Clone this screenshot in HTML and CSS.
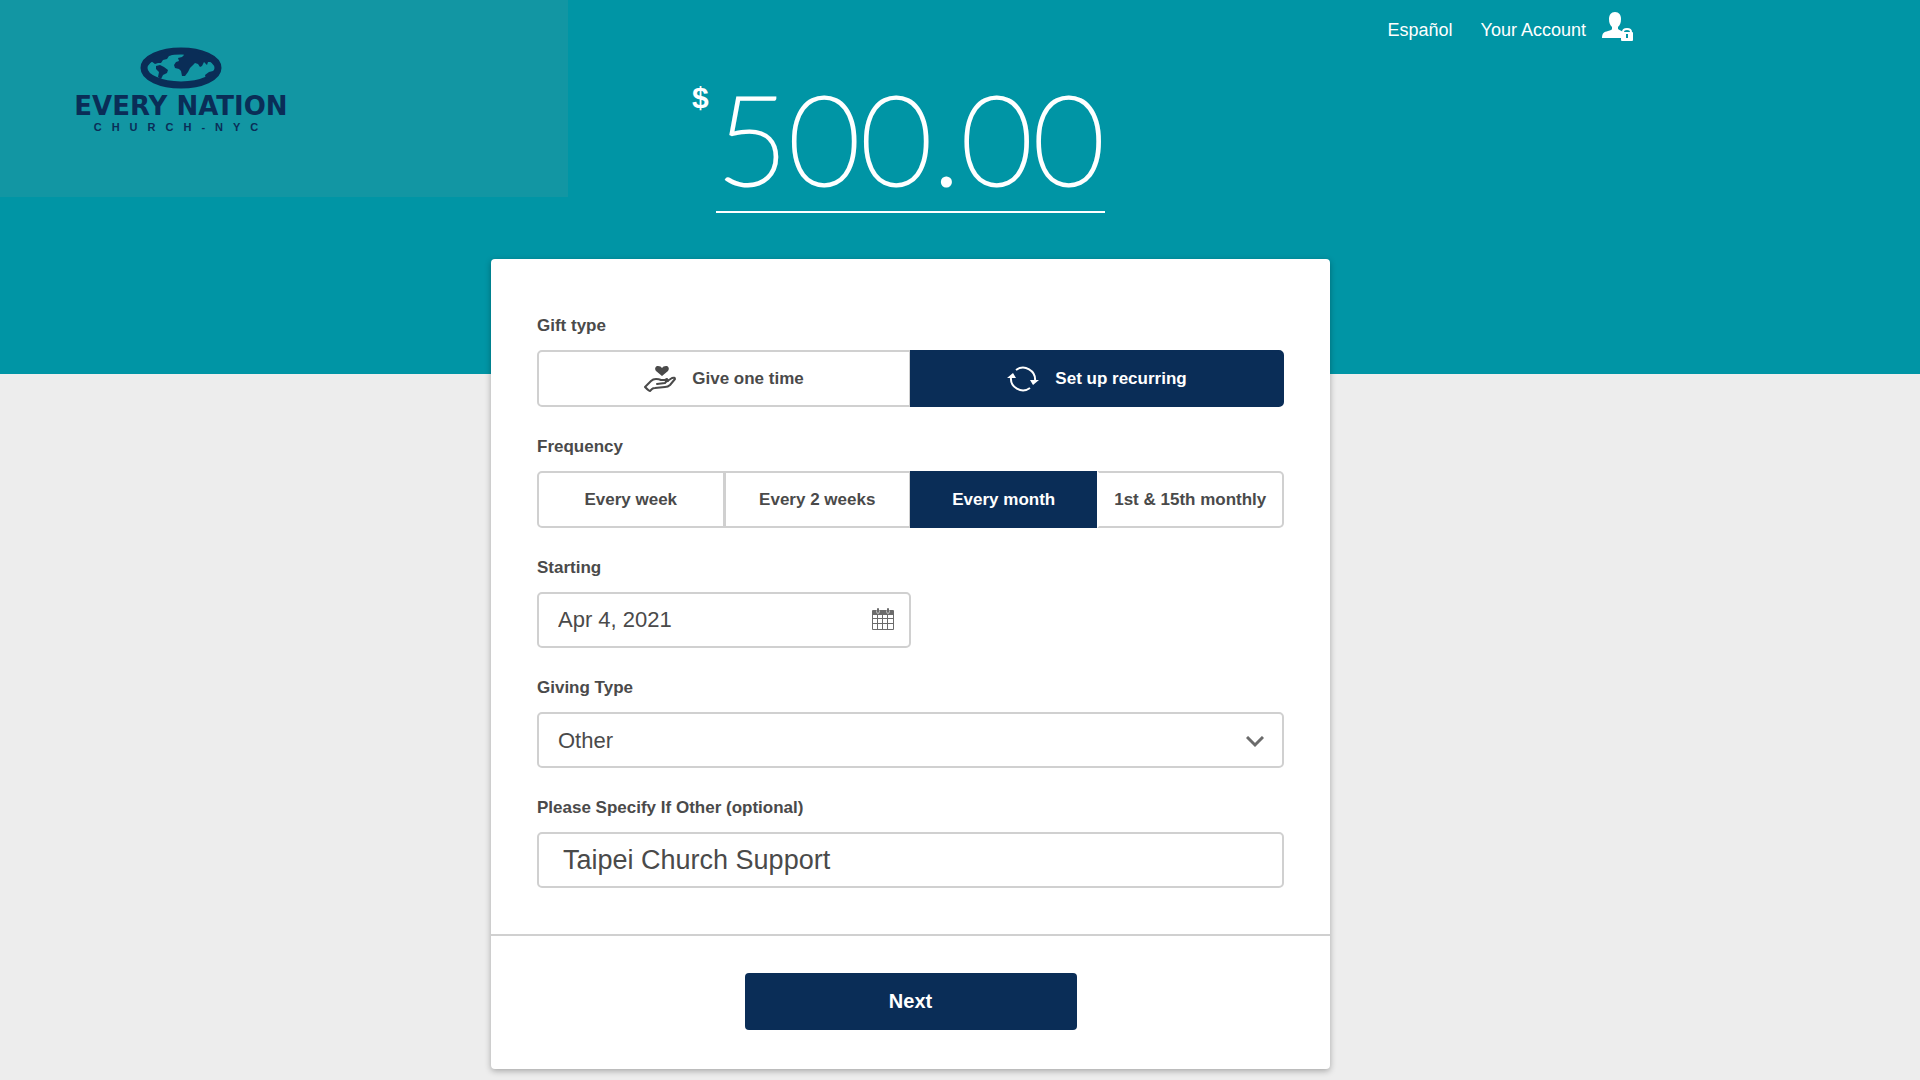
FILE: index.html
```html
<!DOCTYPE html>
<html lang="en">
  <head>
    <meta charset="UTF-8" />
    <meta name="viewport" content="width=device-width, initial-scale=1.0" />
    <title>Every Nation Church NYC - Give</title>
    <link rel="stylesheet" href="styles.css">
  </head>
  <body>
    <header class="banner">
      <div class="logo-panel">
        <div class="logo">
          <svg class="logo-globe" viewBox="0 0 82 42" aria-hidden="true">
            <ellipse cx="41" cy="21" rx="37" ry="17" fill="none" stroke="#0a2d57" stroke-width="7" />
            <path fill="#0a2d57" d="M8 14L16 8L28 4L38 4L34 7L29 9L27 12L23 13L21 16L18 16L15 17L11 14Z" />
            <path fill="#0a2d57" d="M16 19L20 18L24 20L28 23L27 26L23 28L21 32L18 30L19 25L16 22Z" />
            <path fill="#0a2d57" d="M34 18L36 15L39 14L38 11L42 10L44 8L43 5L58 5L70 10L72 15L68 15L67 18L64 15L62 19L60 20L58 17L55 16L52 19L50 21L48 25L45 29L42 29L41 24L39 22L35 21Z" />
            <path fill="#0a2d57" d="M65 28L69 25L73 24L77 21L77 26L72 30L66 32Z" />
          </svg>
          <div class="logo-name">EVERY NATION</div>
          <div class="logo-sub">CHURCH-NYC</div>
        </div>
      </div>

      <div class="amount">
        <label class="amount-sign" for="amount">$</label>
        <input class="amount-input" id="amount" type="text" value="500.00" form="gift-form" />
      </div>

      <nav class="top-nav">
        <a href="#" class="nav-link">Español</a>
        <a href="#" class="nav-link account">
          Your Account
          <svg class="account-icon" viewBox="0 0 32 30" aria-hidden="true">
            <path fill="#fff" d="M13 0C17 0 19 3 19 7C19 11 18 13 16 15V17C17 18 20 19 21 20Q19 21 19 26H0C0 21 2 20 6 19Q10 18 10 17V15C8 13 7 11 7 7C7 3 9 0 13 0Z" />
            <path fill="none" stroke="#fff" stroke-width="2" d="M21 21V20Q21 17 25 17Q29 17 29 20V21" />
            <rect x="19" y="20" width="12" height="9" rx="1" fill="#fff" />
            <path stroke="#0095a5" stroke-width="2" d="M25 22V26" />
          </svg>
        </a>
      </nav>
    </header>

    <main class="page">
      <form class="card" id="gift-form">
        <div class="card-body">
          <div class="field" role="group" aria-labelledby="gift-label">
            <span class="label" id="gift-label">Gift type</span>
            <div class="segments">
              <button type="button" class="segment">
                <svg class="segment-icon" viewBox="0 0 32 26" aria-hidden="true">
                  <path fill="#4a4a4a" d="M18 10L12 5C10 2 12 0 14 0Q17 0 18 2Q19 0 22 0C24 0 26 2 24 5Z" />
                  <path fill="none" stroke="#4a4a4a" stroke-width="2" stroke-linejoin="round" stroke-linecap="round" d="M1 21L7 15Q9 13 12 13Q15 13 17 14H21Q23 15 21 17L13 18M22 16L28 12Q31 11 31 13L26 19Q24 21 21 21L11 22Q9 22 8 23L6 25Q5 25 1 21M21 14L23 13L24 15" />
                </svg>
                Give one time
              </button>
              <button type="button" class="segment active">
                <svg class="segment-icon" viewBox="0 0 32 26" aria-hidden="true">
                  <path fill="none" stroke="#fff" stroke-width="2" d="M9 4A12 12 0 0 1 28 15M23 22A12 12 0 0 1 4 11" />
                  <path fill="#fff" d="M23 14L32 14L26 19ZM0 12L6 7L9 12Z" />
                </svg>
                Set up recurring
              </button>
            </div>
          </div>

          <div class="field" role="group" aria-labelledby="frequency-label">
            <span class="label" id="frequency-label">Frequency</span>
            <div class="segments">
              <button type="button" class="segment">Every week</button>
              <button type="button" class="segment">Every 2 weeks</button>
              <button type="button" class="segment active">Every month</button>
              <button type="button" class="segment">1st &amp; 15th monthly</button>
            </div>
          </div>

          <div class="field">
            <label class="label" for="start-date">Starting</label>
            <div class="control half">
              <input class="input" id="start-date" type="text" value="Apr 4, 2021" />
              <svg class="control-icon calendar" viewBox="0 0 22 22" aria-hidden="true">
                <path fill="#6b6b6b" d="M1 2H21Q22 2 22 3V21Q22 22 21 22H1Q0 22 0 21V3Q0 2 1 2Z" />
                <path fill="#fff" d="M1 7h4v3h-4zM6 7h4v3h-4zM11 7h4v3h-4zM16 7h5v3h-5zM1 11h4v4h-4zM6 11h4v4h-4zM11 11h4v4h-4zM16 11h5v4h-5zM1 16h4v5h-4zM6 16h4v5h-4zM11 16h4v5h-4zM16 16h5v5h-5z" />
                <path stroke="#fff" stroke-width="3" stroke-linecap="round" d="M6 3V4M16 3V4" />
                <path stroke="#6b6b6b" stroke-width="2" stroke-linecap="round" d="M6 1V4M16 1V4" />
              </svg>
            </div>
          </div>

          <div class="field">
            <label class="label" for="giving-type">Giving Type</label>
            <div class="control">
              <select class="input" id="giving-type">
                <option>Other</option>
              </select>
              <svg class="control-icon chevron" viewBox="0 0 18 12" aria-hidden="true">
                <path fill="none" stroke="#6b6b6b" stroke-width="3" d="M1 1L9 9L17 1" />
              </svg>
            </div>
          </div>

          <div class="field">
            <label class="label" for="specify">Please Specify If Other (optional)</label>
            <div class="control">
              <input class="input large" id="specify" type="text" value="Taipei Church Support" />
            </div>
          </div>
        </div>

        <div class="card-footer">
          <button type="submit" class="next-button">Next</button>
        </div>
      </form>
    </main>
  </body>
</html>
```

FILE: styles.css
```css
* {
  box-sizing: border-box;
}

body {
  margin: 0;
  min-height: 100vh;
  font-family: "Liberation Sans", Arial, sans-serif;
  background-color: #ededed;
  color: #4a4a4a;
}

.banner {
  display: grid;
  grid-template-columns: 568px 1fr 568px;
  align-items: start;
  padding: 0 99px 161px 0;
  background-color: #0095a5;
  color: #fff;
}

/* Logo */
.logo-panel {
  padding: 47px 68px 64px;
  background-color: #1296a3;
}

.logo {
  display: flex;
  flex-direction: column;
  align-items: center;
  width: 226px;
  color: #0a2d57;
}

.logo-globe {
  width: 82px;
  height: 42px;
}

.logo-name {
  margin-top: 2px;
  font-size: 26px;
  line-height: 30px;
  font-weight: bold;
  font-family: "DejaVu Sans", sans-serif;
  white-space: nowrap;
}

.logo-sub {
  font-size: 11px;
  line-height: 12px;
  font-weight: bold;
  letter-spacing: 10px;
  white-space: nowrap;
}

/* Amount */
.amount {
  display: flex;
  justify-content: center;
  padding-top: 82px;
}

.amount-sign {
  width: 24px;
  margin-left: -24px;
  font-size: 30px;
  line-height: 32px;
  font-weight: bold;
}

.amount-input {
  width: 389px;
  height: 131px;
  padding: 0 0 20px;
  border: none;
  border-bottom: 2px solid #fff;
  background: none;
  color: #fff;
  font-family: Lato, sans-serif;
  font-size: 124px;
  font-weight: 200;
  -webkit-text-stroke: 3px #fff;
  text-align: center;
}

/* Top links */
.top-nav {
  display: flex;
  justify-content: flex-end;
  align-items: flex-start;
  gap: 28px;
  padding: 12px 187px 0 0;
}

.nav-link {
  display: flex;
  gap: 16px;
  font-size: 18px;
  line-height: 36px;
  color: #fff;
  text-decoration: none;
}

.account-icon {
  width: 32px;
  height: 30px;
}

/* Form card */
.page {
  padding: 0 99px 11px 0;
}

.card {
  position: relative;
  max-width: 839px;
  margin: -115px auto 0;
  border-radius: 4px;
  background-color: #fff;
  box-shadow: 0 2px 6px rgba(0, 0, 0, 0.3);
}

.card-body {
  display: flex;
  flex-direction: column;
  gap: 28px;
  padding: 55px 46px 46px;
}

.field {
  display: flex;
  flex-direction: column;
  gap: 12px;
}

.label {
  font-size: 17px;
  line-height: 24px;
  font-weight: bold;
}

.segments {
  display: flex;
}

.segment {
  flex: 1;
  display: flex;
  align-items: center;
  justify-content: center;
  gap: 16px;
  height: 57px;
  padding: 0;
  border: 2px solid #d0d0d0;
  border-right-width: 1px;
  background-color: #fff;
  color: #4a4a4a;
  font-family: inherit;
  font-size: 17px;
  font-weight: bold;
  white-space: nowrap;
}

.segment:first-child {
  border-radius: 5px 0 0 5px;
}

.segment:last-child {
  border-right-width: 2px;
  border-radius: 0 5px 5px 0;
}

.segment.active {
  border-color: #0a2d57;
  background-color: #0a2d57;
  color: #fff;
}

/* the dark segment already draws the edge */
.active + .segment {
  border-left-color: #fff;
}

.segment-icon {
  width: 32px;
  height: 26px;
}

.control {
  position: relative;
}

.half {
  width: 50%;
}

.input {
  display: block;
  width: 100%;
  height: 56px;
  padding: 0 19px;
  border: 2px solid #d0d0d0;
  border-radius: 5px;
  background-color: #fff;
  color: #4a4a4a;
  font-family: inherit;
  font-size: 22px;
  appearance: none;
}

.large {
  padding: 0 24px;
  font-size: 27px;
}

.control-icon {
  position: absolute;
  pointer-events: none;
}

.calendar {
  top: 16px;
  right: 17px;
  width: 22px;
  height: 22px;
}

.chevron {
  top: 24px;
  right: 20px;
  width: 18px;
  height: 12px;
}

.card-footer {
  display: flex;
  justify-content: center;
  padding: 37px 46px 39px;
  border-top: 2px solid #d0d0d0;
}

.next-button {
  width: 332px;
  height: 57px;
  border: none;
  border-radius: 4px;
  background-color: #0a2d57;
  color: #fff;
  font-family: inherit;
  font-size: 20px;
  font-weight: bold;
}
```
